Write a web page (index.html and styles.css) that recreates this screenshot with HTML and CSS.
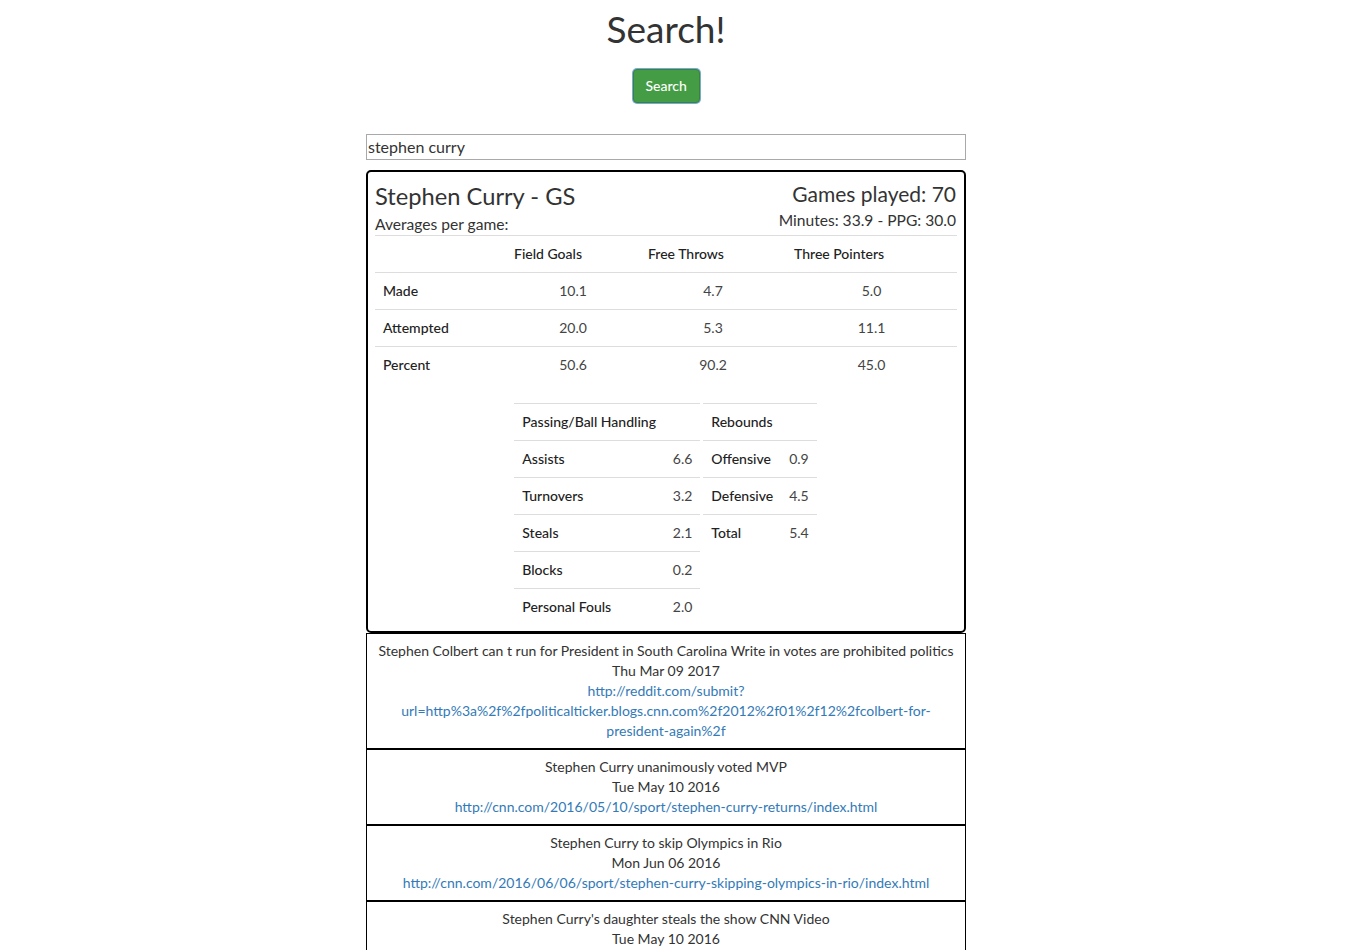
FILE: index.html
```html
<!DOCTYPE html>
<html>
<head>
<meta charset="utf-8">
<title>Search!</title>
<link rel="stylesheet" href="styles.css">
</head>
<body>
<div class="page">
  <h1 class="title">Search!</h1>
  <div class="actions"><button class="btn">Search</button></div>
  <div class="container">
    <input class="search" type="text" value="stephen curry">
    <div class="card">
      <div class="card-head">
        <div class="head-left">
          <h3>Stephen Curry - GS</h3>
          <div class="sub">Averages per game:</div>
        </div>
        <div class="head-right">
          <h3>Games played: 70</h3>
          <div class="sub">Minutes: 33.9 - PPG: 30.0</div>
        </div>
      </div>
      <table class="shoot">
        <colgroup><col class="c1"><col class="c2"><col class="c3"><col class="c4"></colgroup>
        <tr><th></th><th>Field Goals</th><th>Free Throws</th><th>Three Pointers</th></tr>
        <tr><th>Made</th><td>10.1</td><td>4.7</td><td>5.0</td></tr>
        <tr><th>Attempted</th><td>20.0</td><td>5.3</td><td>11.1</td></tr>
        <tr><th>Percent</th><td>50.6</td><td>90.2</td><td>45.0</td></tr>
      </table>
      <div class="split">
        <table class="mini pass">
          <tr><th colspan="2">Passing/Ball Handling</th></tr>
          <tr><th>Assists</th><td>6.6</td></tr>
          <tr><th>Turnovers</th><td>3.2</td></tr>
          <tr><th>Steals</th><td>2.1</td></tr>
          <tr><th>Blocks</th><td>0.2</td></tr>
          <tr><th>Personal Fouls</th><td>2.0</td></tr>
        </table>
        <table class="mini reb">
          <tr><th colspan="2">Rebounds</th></tr>
          <tr><th>Offensive</th><td>0.9</td></tr>
          <tr><th>Defensive</th><td>4.5</td></tr>
          <tr><th>Total</th><td>5.4</td></tr>
        </table>
      </div>
    </div>
    <div class="news">
      <div class="item">
        <div>Stephen Colbert can t run for President in South Carolina Write in votes are prohibited politics</div>
        <div>Thu Mar 09 2017</div>
        <a href="#">http://reddit.com/submit?url=http%3a%2f%2fpoliticalticker.blogs.cnn.com%2f2012%2f01%2f12%2fcolbert-for-president-again%2f</a>
      </div>
      <div class="item">
        <div>Stephen Curry unanimously voted MVP</div>
        <div>Tue May 10 2016</div>
        <a href="#">http://cnn.com/2016/05/10/sport/stephen-curry-returns/index.html</a>
      </div>
      <div class="item">
        <div>Stephen Curry to skip Olympics in Rio</div>
        <div>Mon Jun 06 2016</div>
        <a href="#">http://cnn.com/2016/06/06/sport/stephen-curry-skipping-olympics-in-rio/index.html</a>
      </div>
      <div class="item">
        <div>Stephen Curry's daughter steals the show CNN Video</div>
        <div>Tue May 10 2016</div>
        <a href="#">http://cnn.com/2016/05/10/sport/stephen-curry-daughter-riley-press-conference/index.html</a>
      </div>
    </div>
  </div>
</div>
</body>
</html>
```

FILE: styles.css
```css
* { box-sizing: border-box; }
html, body { margin: 0; padding: 0; background: #fff; }
body {
  font-family: Lato, "Open Sans", sans-serif;
  font-size: 14px;
  line-height: 20px;
  color: #333;
  overflow: hidden;
}
.page { width: 1332px; }
.title {
  margin: 9px 0 0;
  font-size: 37px;
  line-height: 40px;
  font-weight: 400;
  text-align: center;
  color: #333;
}
.actions {
  display: flex;
  justify-content: center;
  margin-top: 20px;
}
.btn {
  font-family: inherit;
  font-size: 14px;
  line-height: 20px;
  font-weight: 500;
  padding: 6px 12px;
  height: 34px;
  width: 67px;
  color: #fff;
  background: #449d44;
  border: 1px solid #398439;
  border-radius: 4px;
  box-shadow: 0 0 0 1px #7aa7e0;
}
.container {
  width: 600px;
  margin: 31px auto 0;
}
.search {
  display: block;
  width: 600px;
  height: 26px;
  padding: 0 1px 2px;
  font-family: inherit;
  font-size: 16px;
  color: #333;
  border: 1px solid #a9a9a9;
  background: #fff;
}
.card {
  margin-top: 10px;
  border: 2px solid #000;
  border-radius: 5px;
  padding: 0 8px 6px 7px;
}
.card-head {
  display: flex;
  justify-content: space-between;
  align-items: flex-start;
  padding-top: 9px;
  margin-bottom: 1px;
}
.card-head h3 {
  margin: 0;
  font-weight: 400;
}
.head-left h3 { font-size: 23.7px; line-height: 30px; }
.head-right h3 { font-size: 21px; line-height: 26px; }
.sub { font-size: 15.6px; line-height: 20px; margin-top: 3px; }
.head-right { text-align: right; }
table { border-collapse: collapse; border-spacing: 0; }
th, td {
  padding: 8px;
  line-height: 20px;
  border-top: 1px solid #ddd;
  font-weight: 400;
  color: #444;
}
th { text-align: left; font-weight: 500; color: #222; }
.shoot { width: 100%; table-layout: fixed; margin-bottom: 20px; }
.shoot .c1 { width: 131px; }
.shoot .c2 { width: 134px; }
.shoot .c3 { width: 146px; }
.shoot .c4 { width: 171px; }
.shoot td { text-align: center; }
.split { display: flex; justify-content: center; align-items: flex-start; gap: 3px; }
.mini td { text-align: right; }
.pass { width: 186px; }
.reb { width: 113px; }
.news .item {
  border: 1px solid #000;
  padding: 7px;
  text-align: center;
}
.news a { color: #337ab7; text-decoration: none; }
```
